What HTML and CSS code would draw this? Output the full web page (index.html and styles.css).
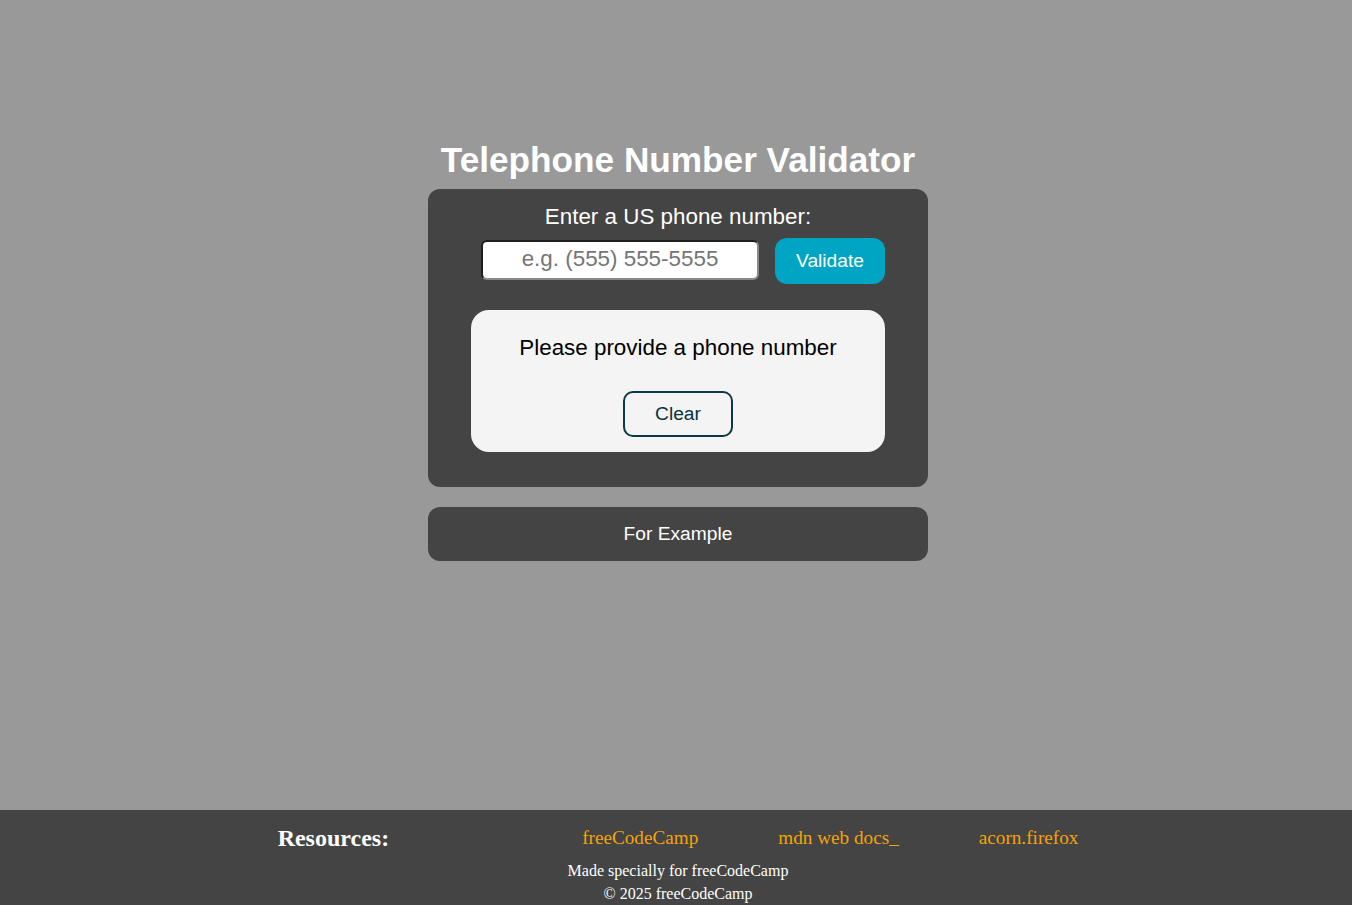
FILE: index.html
```html
<!DOCTYPE html>
<html lang="en">
<head>
<meta charset="utf-8">
<title>Telephone Number Validator</title>
<link rel="stylesheet" href="styles.css">
</head>
<body>
<main class="main">
  <h1 class="title">Telephone Number Validator</h1>
  <section class="card">
    <label class="label" for="user-input">Enter a US phone number:</label>
    <div class="input-row">
      <input id="user-input" class="phone-input" type="text" placeholder="e.g. (555) 555-5555">
      <button class="validate-btn" type="button">Validate</button>
    </div>
    <div class="result-box">
      <p class="result-text">Please provide a phone number</p>
      <button class="clear-btn" type="button">Clear</button>
    </div>
  </section>
  <section class="example">For Example</section>
</main>
<footer class="footer">
  <div class="footer-top">
    <h2 class="res-title">Resources:</h2>
    <nav class="links">
      <a class="link" href="#">freeCodeCamp</a>
      <a class="link" href="#">mdn web docs_</a>
      <a class="link" href="#">acorn.firefox</a>
    </nav>
  </div>
  <p class="foot-line">Made specially for freeCodeCamp</p>
  <p class="foot-line">© 2025 freeCodeCamp</p>
</footer>
</body>
</html>
```
FILE: styles.css
```css
* { box-sizing: border-box; }
html, body { margin: 0; padding: 0; }
body {
  min-height: 100vh;
  display: flex;
  flex-direction: column;
  background: #999999;
  font-family: "Liberation Sans", Arial, sans-serif;
  padding-left: 4px;
}
.main {
  flex: 1;
  display: flex;
  flex-direction: column;
  align-items: center;
  padding-top: 140px;
}
.title {
  margin: 0 0 9px;
  font-size: 35.2px;
  line-height: 40px;
  font-weight: bold;
  color: #ffffff;
}
.card {
  width: 500px;
  background: #444444;
  border-radius: 12px;
  padding: 15px 43px 35px;
  display: flex;
  flex-direction: column;
  align-items: stretch;
}
.label {
  display: block;
  text-align: center;
  color: #ffffff;
  font-size: 22.4px;
  line-height: 26px;
}
.input-row {
  margin-top: 8px;
  display: flex;
  justify-content: center;
  align-items: center;
  gap: 16px;
  padding-left: 10px;
}
.phone-input {
  width: 278px;
  height: 40px;
  margin-top: -2px;
  border-radius: 6px;
  border: 2px solid;
  border-color: #1e1e1e #8a8a8a #8a8a8a #1e1e1e;
  background: #ffffff;
  font-family: "Liberation Sans", Arial, sans-serif;
  font-size: 22.4px;
  text-align: center;
  padding: 0 4px 2px;
  color: #000;
}
.phone-input::placeholder { color: #757575; }
.validate-btn {
  width: 110px;
  height: 46px;
  border: none;
  border-radius: 12px;
  background: #00a5c3;
  color: #ffffff;
  font-family: "Liberation Sans", Arial, sans-serif;
  font-size: 19.2px;
}
.result-box {
  margin-top: 26px;
  background: #f4f4f4;
  border-radius: 18px;
  padding: 25px 0 15px;
  display: flex;
  flex-direction: column;
  align-items: center;
}
.result-text {
  margin: 0;
  font-size: 22.4px;
  line-height: 26px;
  color: #000000;
}
.clear-btn {
  margin-top: 30px;
  width: 110px;
  height: 46px;
  border: 2px solid #0a3a44;
  border-radius: 10px;
  background: transparent;
  color: #08323c;
  font-family: "Liberation Sans", Arial, sans-serif;
  font-size: 19.2px;
}
.example {
  margin-top: 20px;
  width: 500px;
  height: 54px;
  background: #444444;
  border-radius: 12px;
  display: flex;
  align-items: center;
  justify-content: center;
  color: #ffffff;
  font-size: 19.2px;
}
.footer {
  background: #444444;
  margin-left: -4px;
  padding: 14px 0 0 4px;
  height: 95px;
  font-family: "Liberation Serif", "Times New Roman", serif;
  color: #ffffff;
  text-align: center;
}
.footer-top {
  height: 28px;
  margin-bottom: 7px;
  display: flex;
  justify-content: center;
  align-items: center;
}
.res-title {
  margin: 0 193px 0 0;
  font-size: 24px;
  line-height: 28px;
  font-weight: bold;
}
.links {
  display: flex;
  gap: 80px;
}
.link {
  color: #f2a30a;
  text-decoration: none;
  font-size: 19.2px;
  line-height: 30px;
}
.foot-line {
  margin: 0;
  font-size: 16px;
  line-height: 23px;
}
```
